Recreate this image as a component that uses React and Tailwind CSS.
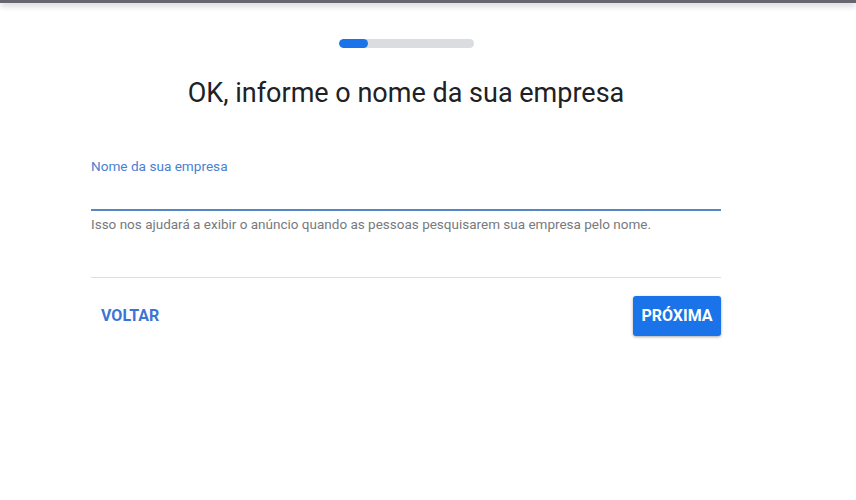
export default function App() {
  return (
    <div className="w-[856px] h-[500px] bg-white relative overflow-hidden" style={{ fontFamily: "Roboto, 'Noto Sans', sans-serif" }}>
      <div className="h-[3px] bg-[#67656e] shadow-[0_2px_6px_rgba(0,0,0,0.3)]" />
      <div className="ml-[91px] w-[630px] flex flex-col">
        <div className="flex justify-center mt-[36px]">
          <div className="w-[135px] h-[9px] rounded-full bg-[#dadce0] overflow-hidden">
            <div className="w-[29px] h-full rounded-full bg-[#1a73e8]" />
          </div>
        </div>
        <h1 className="text-center text-[27px] leading-[32px] text-[#202124] mt-[29px]">OK, informe o nome da sua empresa</h1>
        <div className="mt-[49px] text-[13.6px] leading-[16px] text-[#4a7fd4]">Nome da sua empresa</div>
        <div className="mt-[35px] h-[2px] bg-[#5588c2]" />
        <div className="mt-[5px] text-[13.5px] leading-[16px] text-[#777a7e]">Isso nos ajudará a exibir o anúncio quando as pessoas pesquisarem sua empresa pelo nome.</div>
        <div className="mt-[45px] h-px bg-[#e0e0e0]" />
        <div className="mt-[18px] flex items-center justify-between">
          <button className="ml-[10px] text-[16px] font-bold text-[#3c74d6]">VOLTAR</button>
          <button className="w-[88px] h-[40px] rounded-[3px] bg-[#1a73e8] text-white text-[16px] font-bold shadow-[0_1px_3px_rgba(0,0,0,0.35)]">PRÓXIMA</button>
        </div>
      </div>
    </div>
  );
}
